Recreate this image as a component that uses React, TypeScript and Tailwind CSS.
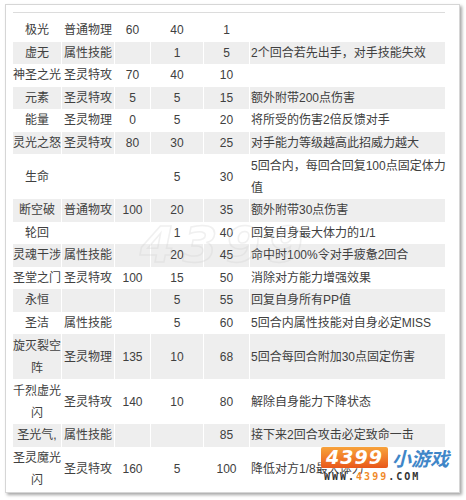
import React from "react";

type Row = { n: string[]; t: string; p: string; pp: string; lv: string; d: string[] };

const rows: Row[] = [
  { n: ["极光"], t: "普通物理", p: "60", pp: "40", lv: "1", d: [""] },
  { n: ["虚无"], t: "属性技能", p: "", pp: "1", lv: "5", d: ["2个回合若先出手，对手技能失效"] },
  { n: ["神圣之光"], t: "圣灵特攻", p: "70", pp: "40", lv: "10", d: [""] },
  { n: ["元素"], t: "圣灵特攻", p: "5", pp: "5", lv: "15", d: ["额外附带200点伤害"] },
  { n: ["能量"], t: "圣灵物理", p: "0", pp: "5", lv: "20", d: ["将所受的伤害2倍反馈对手"] },
  { n: ["灵光之怒"], t: "圣灵特攻", p: "80", pp: "30", lv: "25", d: ["对手能力等级越高此招威力越大"] },
  { n: ["生命"], t: "", p: "", pp: "5", lv: "30", d: ["5回合内，每回合回复100点固定体力", "值"] },
  { n: ["断空破"], t: "普通物攻", p: "100", pp: "20", lv: "35", d: ["额外附带30点伤害"] },
  { n: ["轮回"], t: "", p: "", pp: "1", lv: "40", d: ["回复自身最大体力的1/1"] },
  { n: ["灵魂干涉"], t: "属性技能", p: "", pp: "20", lv: "45", d: ["命中时100%令对手疲惫2回合"] },
  { n: ["圣堂之门"], t: "圣灵特攻", p: "100", pp: "15", lv: "50", d: ["消除对方能力增强效果"] },
  { n: ["永恒"], t: "", p: "", pp: "5", lv: "55", d: ["回复自身所有PP值"] },
  { n: ["圣洁"], t: "属性技能", p: "", pp: "5", lv: "60", d: ["5回合内属性技能对自身必定MISS"] },
  { n: ["旋灭裂空", "阵"], t: "圣灵物理", p: "135", pp: "10", lv: "68", d: ["5回合每回合附加30点固定伤害"] },
  { n: ["千烈虚光", "闪"], t: "圣灵特攻", p: "140", pp: "10", lv: "80", d: ["解除自身能力下降状态"] },
  { n: ["圣光气,"], t: "属性技能", p: "", pp: "", lv: "85", d: ["接下来2回合攻击必定致命一击"] },
  { n: ["圣灵魔光", "闪"], t: "圣灵特攻", p: "160", pp: "5", lv: "100", d: ["降低对方1/8最大体力"] },
];

function Cell({ children, cls = "" }: { children: React.ReactNode; cls?: string }) {
  return <div className={`flex flex-col justify-center ${cls}`}>{children}</div>;
}

export default function App() {
  return (
    <div
      className="relative w-[466px] h-[500px] bg-white overflow-hidden text-[12px] text-[#404040]"
      style={{ fontFamily: '"Liberation Sans", "Noto Sans CJK SC", sans-serif' }}
    >
      <div className="ml-[5px] mt-[4px] w-[455px] h-[489px] border border-[#d6d6d6] bg-white shadow-[2px_2px_3px_rgba(0,0,0,0.35)] pl-[7px] pt-[7px]">
        <div className="w-[432px] h-px bg-[#dcdcdc]" />
        <div className="mt-[6px] flex flex-col">
          {rows.map((r, i) => {
            const tall = r.n.length > 1 || r.d.length > 1;
            const gray = i % 2 === 1;
            const bg = gray ? "bg-[#eeeeee]" : "bg-white";
            return (
              <div
                key={i}
                className={`grid grid-cols-[48px_52px_35px_52px_45px_195px] gap-x-px leading-[22px] ${
                  tall ? "h-[45px]" : "h-[22.5px]"
                }`}
              >
                <Cell cls={`${bg} items-center text-center`}>
                  {r.n.map((s, k) => (
                    <span key={k} className="whitespace-nowrap">{s}</span>
                  ))}
                </Cell>
                <Cell cls={`${bg} items-center`}>{r.t}</Cell>
                <Cell cls={`${bg} items-center`}>{r.p}</Cell>
                <Cell cls={`${bg} items-center`}>{r.pp}</Cell>
                <Cell cls={`${bg} items-center`}>{r.lv}</Cell>
                <Cell cls={`${bg} items-start pl-px`}>
                  {r.d.map((s, k) => (
                    <span key={k} className="whitespace-nowrap">{s}</span>
                  ))}
                </Cell>
              </div>
            );
          })}
        </div>
      </div>

      {/* faint watermark */}
      <div
        className="pointer-events-none absolute left-[140px] top-[220px] text-[50px] font-bold italic leading-none tracking-[8px] text-transparent opacity-30"
        style={{ WebkitTextStroke: "1.5px #cfcfcf", fontFamily: '"DejaVu Sans", sans-serif' }}
      >
        4399
      </div>

      {/* 4399 logo */}
      <div className="absolute left-[321px] top-[447px] flex flex-col items-start">
        <div className="flex items-center gap-[4px]">
          <div className="h-[21px] w-[67px] -skew-x-[8px] rounded-[2px] bg-gradient-to-b from-[#f7a23a] to-[#e8561a] shadow-[0_0_2px_#fff] flex items-center justify-center">
            <span
              className="text-[19px] font-bold italic leading-none text-white tracking-[1px]"
              style={{ fontFamily: '"DejaVu Sans", sans-serif' }}
            >
              4399
            </span>
          </div>
          <span
            className="text-[19px] italic leading-none text-[#3f86c8] font-bold"
            style={{ fontFamily: '"Noto Sans CJK SC", sans-serif' }}
          >
            小游戏
          </span>
        </div>
        <div
          className="mt-[4px] pl-[3px] text-[10px] font-bold leading-none tracking-[2px] text-[#333]"
          style={{ fontFamily: '"DejaVu Sans Mono", monospace' }}
        >
          WWW.<span className="text-[#f08a2a]">4399</span>.COM
        </div>
      </div>
    </div>
  );
}
